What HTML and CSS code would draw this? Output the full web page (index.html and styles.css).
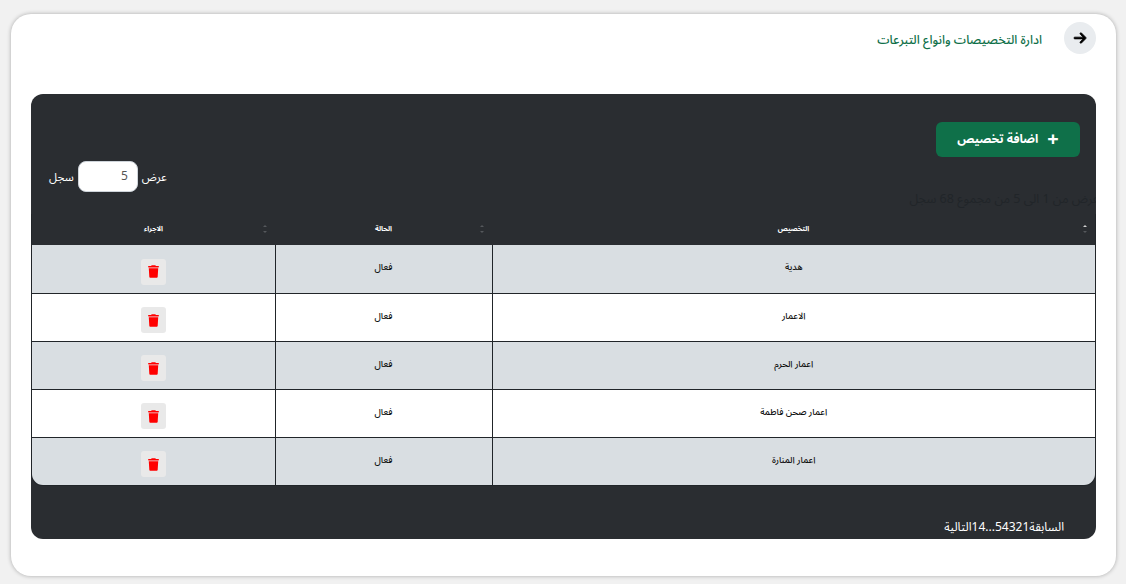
FILE: index.html
```html
<!DOCTYPE html>
<html lang="ar" dir="rtl">
<head>
    <meta charset="UTF-8">
    <meta name="viewport" content="width=device-width, initial-scale=1.0">
    <title>ادارة التخصيصات وانواع التبرعات</title>
    <link rel="stylesheet" href="styles.css">
</head>
<body>
    <div class="card">
        <!-- Page title -->
        <header class="page-head">
            <a href="#" class="back">
                <svg width="14" height="14" viewBox="0 0 448 512"><path fill="#000" stroke="#000" stroke-width="28" d="M438.6 278.6c12.5-12.5 12.5-32.8 0-45.3l-160-160c-12.5-12.5-32.8-12.5-45.3 0s-12.500 32.800 0 45.300L338.800 224 32 224c-17.700 0-32 14.300-32 32s14.300 32 32 32l306.700 0L233.400 393.400c-12.500 12.500-12.500 32.800 0 45.300s32.800 12.500 45.300 0l160-160z"/></svg>
            </a>
            <h1>ادارة التخصيصات وانواع التبرعات</h1>
        </header>

        <section class="panel">
            <div class="add-row">
                <a href="#" class="add-btn"><span class="plus">+</span>اضافة تخصيص</a>
            </div>
            <div class="length-row">
                <label class="length">عرض <input type="text" value="5" class="length-input"> سجل</label>
            </div>
            <div class="info">عرض من 1 الى 5 من مجموع 68 سجل</div>

            <div class="table-wrap">
                <table>
                    <thead>
                        <tr>
                            <th class="col-name">التخصيص<span class="sort"></span></th>
                            <th class="col-state">الحالة<span class="sort"></span></th>
                            <th class="col-action">الاجراء<span class="sort"></span></th>
                        </tr>
                    </thead>
                    <tbody id="rows"></tbody>
                </table>
            </div>

            <nav class="pager">
                <a href="#">السابقة</a>
                <a href="#">1</a>
                <a href="#">2</a>
                <a href="#">3</a>
                <a href="#">4</a>
                <a href="#">5</a>
                <span>...</span>
                <a href="#">14</a>
                <a href="#">التالية</a>
            </nav>
        </section>
    </div>

    <script src="app.js"></script>
</body>
</html>
```

FILE: styles.css
```css
/* General layout */
body {
    font-family: "Noto Sans Arabic", "Noto Sans", "DejaVu Sans", sans-serif;
    background-color: #f1f1f1;
    margin: 0;
    padding: 14px 10px 8px 11px;
}
a {
    text-decoration: none;
    color: inherit;
}
.card {
    height: 562px;
    box-sizing: border-box;
    background: #fff;
    border-radius: 20px;
    padding: 8px 20px 0;
    box-shadow: 0 0 4px rgba(0, 0, 0, 0.3);
}

/* Title */
.page-head {
    display: flex;
    align-items: center;
    gap: 22px;
    height: 32px;
    margin-bottom: 40px;
}
.back {
    width: 32px;
    height: 32px;
    border-radius: 50%;
    background-color: #e9ecef;
    display: flex;
    align-items: center;
    justify-content: center;
}
.page-head h1 {
    margin: 4px 0 0;
    font-size: 12.3px;
    font-weight: 500;
    color: #0f7049;
}

/* Dark panel */
.panel {
    height: 445px;
    box-sizing: border-box;
    background-color: #2a2d31;
    border-radius: 12px;
    padding-top: 28px;
    overflow: hidden;
}
.add-row {
    padding: 0 16px;
    height: 35px;
}
.add-btn {
    display: inline-flex;
    align-items: center;
    justify-content: center;
    width: 144px;
    height: 35px;
    gap: 9px;
    border-radius: 6px;
    background-color: #0f7049;
    color: #fff;
    font-size: 12px;
    font-weight: 700;
}
.plus {
    font-size: 20px;
    font-weight: 700;
    line-height: 1;
}
.length-row {
    margin-top: 4px;
    height: 31px;
    padding: 0 18px;
    display: flex;
    justify-content: flex-end;
}
.length {
    display: flex;
    align-items: center;
    gap: 4px;
    color: #fff;
    font-size: 11.5px;
}
.length-input {
    width: 60px;
    height: 31px;
    box-sizing: border-box;
    border: 1px solid #ced4da;
    border-radius: 8px;
    padding: 0 9px;
    font-size: 12px;
    font-family: inherit;
    color: #555;
    text-align: right;
    direction: ltr;
}
.info {
    margin: 0 -3px 0 0;
    height: 22px;
    line-height: 14px;
    font-size: 12.5px;
    color: #212529;
    white-space: nowrap;
}

/* Table */
.table-wrap {
    border: solid #212529;
    border-width: 0 1px 1px;
    border-radius: 0 0 12px 12px;
    overflow: hidden;
}
table {
    width: 100%;
    table-layout: fixed;
    border-collapse: collapse;
}
th {
    position: relative;
    height: 31px;
    box-sizing: border-box;
    padding: 0 0 2px;
    color: #fff;
    font-size: 7px;
    font-weight: 700;
    text-align: center;
}
td {
    height: 48px;
    box-sizing: border-box;
    padding: 0 0 2px;
    border: 1px solid #212529;
    color: #111;
    font-size: 9px;
    font-weight: 500;
    text-align: center;
}
th:first-child, td:first-child { border-right: 0; }
th:last-child, td:last-child { border-left: 0; }
tr:last-child td { border-bottom: 0; }
tbody tr:first-child td { border-top: 0; }
tbody tr:nth-child(odd) td { background-color: #d9dee2; }
tbody tr:nth-child(even) td { background-color: #fff; }
.col-state { width: 217px; }
.col-action { width: 243px; }

.sort {
    position: absolute;
    top: 11px;
    right: 7px;
    width: 5px;
    height: 8px;
}
.sort::before, .sort::after {
    content: "";
    position: absolute;
    left: 0;
    border-left: 2px solid transparent;
    border-right: 2px solid transparent;
}
.sort::before {
    top: 0;
    border-bottom: 2px solid #55585c;
}
.sort::after {
    bottom: 0;
    border-top: 2px solid #55585c;
}
.col-name .sort::before { border-bottom-color: #d0d0d0; }

td.action-cell {
    padding: 6px 0 0;
}
.del {
    display: inline-flex;
    align-items: center;
    justify-content: center;
    width: 25px;
    height: 26px;
    border-radius: 3px;
    background-color: #e9e9e9;
    vertical-align: middle;
}

/* Pagination */
.pager {
    display: flex;
    padding: 33px 32px 0 0;
    color: #fff;
    font-size: 12px;
    line-height: 18px;
}
```

FILE: app.js
```js
// rows of the allocation table
const rows = ['هدية', 'الاعمار', 'اعمار الحرم', 'اعمار صحن فاطمة', 'اعمار المنارة'];
const trash = '<svg width="11" height="13" viewBox="0 0 448 512"><path fill="#f00" d="M135.200 17.700L128 32H32C14.300 32 0 46.300 0 64s14.300 32 32 32h384c17.700 0 32-14.300 32-32s-14.300-32-32-32h-96l-7.200-14.300C307.400 6.800 296.300 0 284.200 0H163.800c-12.100 0-23.200 6.800-28.600 17.700zM416 128H32l21.200 339c1.600 25.300 22.600 45 47.900 45h245.800c25.300 0 46.300-19.700 47.900-45L416 128z"/></svg>';

const body = document.getElementById('rows');
rows.forEach(name => {
    const row = document.createElement('tr');
    row.innerHTML = `
        <td>${name}</td>
        <td>فعال</td>
        <td class="action-cell"><a href="#" class="del">${trash}</a></td>
    `;
    body.appendChild(row);
});
```
